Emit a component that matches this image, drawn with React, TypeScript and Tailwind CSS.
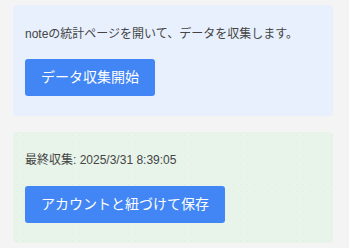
import React from 'react';

const FONT = "font-['Liberation_Sans','Noto_Sans_CJK_JP',sans-serif]";

export default function App() {
  return (
    <div className={`min-h-[248px] w-full bg-[#f4f4f4] pl-[13px] pr-[16px] pt-[5px] ${FONT}`}>
      {/* collect */}
      <div className="rounded-[4px] bg-[#e8f0fe] px-3 pt-[17px] pb-5">
        <p className="text-[12px] leading-[24px] text-[#444]">noteの統計ページを開いて、データを収集します。</p>
        <button className="mt-[13px] rounded-[3px] bg-[#4285f4] px-4 py-2 text-[14px] leading-[21px] text-white">
          データ収集開始
        </button>
      </div>

      {/* save */}
      <div className="mt-4 rounded-[4px] bg-[#e8f4ea] bg-[radial-gradient(circle,#dfede2_0.6px,transparent_0.8px)] bg-[length:7px_7px] px-3 pt-[16px] pb-5">
        <p className="text-[12px] leading-[24px] text-[#444]">最終収集: 2025/3/31 8:39:05</p>
        <button className="mt-[14px] rounded-[3px] bg-[#4285f4] px-4 py-2 text-[14px] leading-[21px] text-white">
          アカウントと紐づけて保存
        </button>
      </div>
    </div>
  );
}
